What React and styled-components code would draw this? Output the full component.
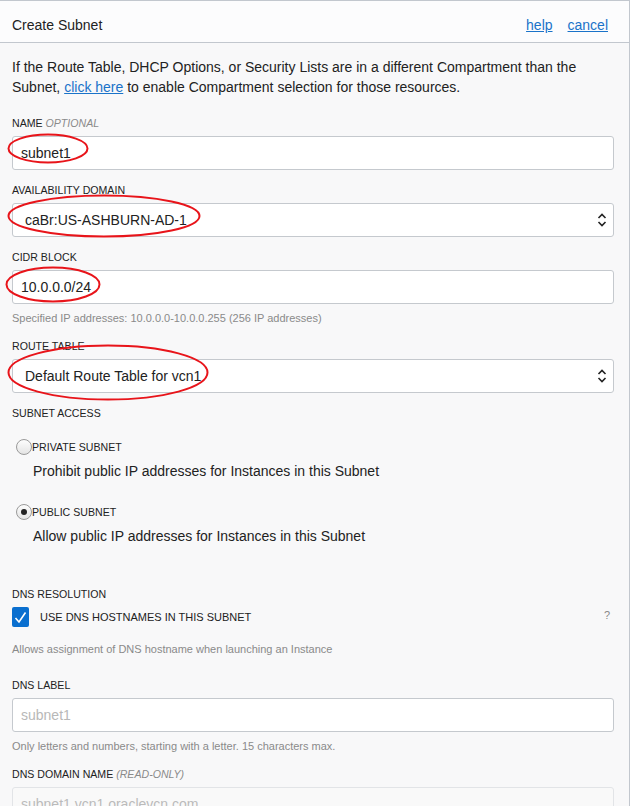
import React from "react";
import styled, { createGlobalStyle } from "styled-components";

const GlobalStyle = createGlobalStyle`
  html, body {
    margin: 0;
    padding: 0;
    background: #f8f8f9;
    overflow: hidden;
  }
  * {
    box-sizing: border-box;
  }
`;

function Ellipse({ left, top, width, height }) {
  return (
    <Mark style={{ left, top, width, height }} viewBox={`0 0 ${width} ${height}`}>
      <ellipse
        cx={width / 2}
        cy={height / 2}
        rx={width / 2 - 1.5}
        ry={height / 2 - 1.5}
        fill="none"
        stroke="#e8141a"
        strokeWidth="2"
      />
    </Mark>
  );
}

function Spinner() {
  return (
    <SpinIcon width="10" height="16" viewBox="0 0 10 16">
      <path d="M1.5 6 L5 2.5 L8.5 6" fill="none" stroke="#222" strokeWidth="1.6" />
      <path d="M1.5 10 L5 13.5 L8.5 10" fill="none" stroke="#222" strokeWidth="1.6" />
    </SpinIcon>
  );
}

function App() {
  return (
    <>
      <GlobalStyle />
      <Panel>
        <Header>
          <HeaderTitle>Create Subnet</HeaderTitle>
          <HeaderLinks>
            <Link href="#">help</Link>
            <Link href="#">cancel</Link>
          </HeaderLinks>
        </Header>

        <Body>
          <Intro>
            <span>If the Route Table, DHCP Options, or Security Lists are in a different Compartment than the
            Subnet, </span><Link href="#">click here</Link><span> to enable Compartment selection for those resources.</span>
          </Intro>

          <Group>
            <Label>
              NAME <Optional>OPTIONAL</Optional>
            </Label>
            <Field>
              <TextInput defaultValue="subnet1" />
              <Ellipse left={-5} top={-3} width={82} height={31} />
            </Field>
          </Group>

          <Group>
            <Label>AVAILABILITY DOMAIN</Label>
            <Field>
              <SelectBox>caBr:US-ASHBURN-AD-1</SelectBox>
              <Spinner />
              <Ellipse left={-5} top={-9} width={194} height={44} />
            </Field>
          </Group>

          <Group>
            <Label>CIDR BLOCK</Label>
            <Field>
              <TextInput defaultValue="10.0.0.0/24" />
              <Ellipse left={-7} top={-4} width={96} height={37} />
            </Field>
            <Help>Specified IP addresses: 10.0.0.0-10.0.0.255 (256 IP addresses)</Help>
          </Group>

          <Group>
            <Label>ROUTE TABLE</Label>
            <Field>
              <SelectBox>Default Route Table for vcn1</SelectBox>
              <Spinner />
              <Ellipse left={-5} top={-15} width={202} height={57} />
            </Field>
          </Group>

          <AccessGroup>
            <Label>SUBNET ACCESS</Label>
            <RadioList>
              <RadioOption>
                <RadioRow>
                  <Radio />
                  <OptionLabel>PRIVATE SUBNET</OptionLabel>
                </RadioRow>
                <OptionText>Prohibit public IP addresses for Instances in this Subnet</OptionText>
              </RadioOption>
              <RadioOption>
                <RadioRow>
                  <Radio $checked />
                  <OptionLabel>PUBLIC SUBNET</OptionLabel>
                </RadioRow>
                <OptionText>Allow public IP addresses for Instances in this Subnet</OptionText>
              </RadioOption>
            </RadioList>
          </AccessGroup>

          <DnsGroup>
            <Label>DNS RESOLUTION</Label>
            <CheckRow>
              <CheckBox>
                <svg width="13" height="13" viewBox="0 0 13 13">
                  <path d="M1.5 7 L5 11 L11.5 1.5" fill="none" stroke="#fff" strokeWidth="1.6" />
                </svg>
              </CheckBox>
              <CheckLabel>USE DNS HOSTNAMES IN THIS SUBNET</CheckLabel>
              <Question>?</Question>
            </CheckRow>
            <Help $gap={15}>Allows assignment of DNS hostname when launching an Instance</Help>
          </DnsGroup>

          <Group>
            <Label>DNS LABEL</Label>
            <TextInput placeholder="subnet1" />
            <Help>Only letters and numbers, starting with a letter. 15 characters max.</Help>
          </Group>

          <Group>
            <Label>
              DNS DOMAIN NAME <Optional>(READ-ONLY)</Optional>
            </Label>
            <TextInput $readOnly readOnly defaultValue="subnet1.vcn1.oraclevcn.com" />
          </Group>
        </Body>
      </Panel>
    </>
  );
}

const Panel = styled.div`
  width: 630px;
  height: 806px;
  border-top: 1px solid #c2c7ce;
  border-right: 1px solid #c2c7ce;
  background: #f8f8f9;
  font-family: "Liberation Sans", Arial, sans-serif;
  color: #222;
  overflow: hidden;
`;

const Header = styled.div`
  height: 42px;
  display: flex;
  justify-content: space-between;
  align-items: center;
  padding: 7px 21px 0 12px;
  background: #fcfcfd;
  border-bottom: 1px solid #c2c7ce;
`;

const HeaderTitle = styled.span`
  font-size: 14px;
  color: #222;
`;

const HeaderLinks = styled.div`
  display: flex;
  gap: 15px;
`;

const Link = styled.a`
  font-size: 14px;
  color: #1a73c9;
  text-decoration: underline;
`;

const Body = styled.div`
  padding: 14px 15px 0 12px;
`;

const Intro = styled.p`
  margin: 0 0 20px;
  font-size: 14px;
  line-height: 20px;
  color: #222;
`;

const Group = styled.div`
  margin-bottom: 14px;
`;

const AccessGroup = styled.div`
  margin-top: 2px;
`;

const DnsGroup = styled.div`
  margin-top: 42px;
  margin-bottom: 22px;
`;

const Label = styled.div`
  font-size: 10.6px;
  line-height: 13px;
  color: #222;
  margin-bottom: 6px;
`;

const Optional = styled.span`
  font-style: italic;
  color: #8a8a8a;
`;

const Field = styled.div`
  position: relative;
`;

const TextInput = styled.input`
  display: block;
  width: 100%;
  height: 34px;
  padding: 0 8px;
  font-family: "Liberation Sans", Arial, sans-serif;
  font-size: 14px;
  color: ${(p) => (p.$readOnly ? "#bbb" : "#222")};
  background: ${(p) => (p.$readOnly ? "#f9f9f9" : "#fff")};
  border: 1px solid ${(p) => (p.$readOnly ? "#e2e4e7" : "#c5c9ce")};
  border-radius: 3px;
  outline: none;

  &::placeholder {
    color: #b8b8b8;
  }
`;

const SelectBox = styled.div`
  height: 34px;
  display: flex;
  align-items: center;
  padding: 0 30px 0 12px;
  font-size: 14px;
  color: #222;
  background: #fff;
  border: 1px solid #c5c9ce;
  border-radius: 3px;
`;

const SpinIcon = styled.svg`
  position: absolute;
  right: 7px;
  top: 9px;
`;

const Mark = styled.svg`
  position: absolute;
  pointer-events: none;
  overflow: visible;
`;

const Help = styled.div`
  margin-top: ${(p) => p.$gap || 7}px;
  font-size: 11px;
  line-height: 15px;
  color: #8a8a8a;
`;

const RadioList = styled.div`
  display: flex;
  flex-direction: column;
  gap: 23px;
  padding-top: 13px;
`;

const RadioOption = styled.div`
  display: flex;
  flex-direction: column;
  gap: 6px;
`;

const RadioRow = styled.div`
  display: flex;
  align-items: center;
  padding-left: 4px;
`;

const Radio = styled.span`
  width: 16px;
  height: 16px;
  border-radius: 50%;
  border: 1px solid #9a9a9a;
  background: linear-gradient(#fdfdfd, #e4e4e4);
  display: flex;
  align-items: center;
  justify-content: center;

  &::after {
    content: "";
    width: 6px;
    height: 6px;
    border-radius: 50%;
    background: #222;
    display: ${(p) => (p.$checked ? "block" : "none")};
  }
`;

const OptionLabel = styled.span`
  font-size: 10.6px;
  color: #222;
`;

const OptionText = styled.div`
  padding-left: 21px;
  font-size: 14px;
  line-height: 20px;
  color: #222;
`;

const CheckRow = styled.div`
  display: flex;
  align-items: center;
  gap: 11px;
  margin-top: 3px;
`;

const CheckBox = styled.span`
  width: 17px;
  height: 20px;
  border-radius: 2px;
  background: #0a6fcf;
  display: flex;
  align-items: center;
  justify-content: center;
`;

const CheckLabel = styled.span`
  font-size: 11px;
  color: #222;
  flex: 1;
`;

const Question = styled.span`
  font-size: 11px;
  color: #888;
  margin: 2px 4px 0 0;
  align-self: flex-start;
`;

export default App;
